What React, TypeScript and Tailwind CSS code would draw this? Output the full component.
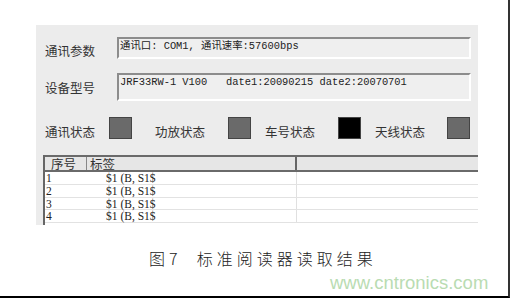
import React from "react";

const cjk = { fontFamily: '"Noto Sans CJK SC", "Noto Sans", sans-serif' };
const mono = { fontFamily: '"Liberation Mono", "Noto Sans CJK SC", monospace' };

function Field({ h, text }: { h: string; text: string }) {
    return (
        <div
            className={`flex-1 ${h} bg-[#efefef] border-t-2 border-l-2 border-t-[#8c8c8c] border-l-[#8c8c8c] border-b-2 border-r-2 border-b-white border-r-white pl-[1px] text-[10.4px] leading-[14px] text-[#222] whitespace-pre`}
            style={mono}
        >
            {text}
        </div>
    );
}

function Lamp({ dark }: { dark?: boolean }) {
    return (
        <div
            className={`w-[23px] h-[22px] border border-[#444] ${dark ? "bg-black" : "bg-[#6a6a6a]"}`}
        />
    );
}

const rows = ["1", "2", "3", "4"];

export default function App() {
    return (
        <div className="w-[510px] h-[298px] bg-white border-r-2 border-b-2 border-r-[#333] border-b-black overflow-hidden flex flex-col">
            {/* main panel */}
            <div
                className="ml-[36px] mt-[25px] w-[442px] h-[200px] bg-[#ececec] pt-[12px] text-[#333] overflow-hidden"
                style={cjk}
            >
                <div className="flex items-start pl-[9px] pr-[7px]">
                    <div className="w-[72px] mt-[7px] text-[12.5px] leading-[14px] whitespace-nowrap">通讯参数</div>
                    <Field h="h-[22px]" text="通讯口: COM1, 通讯速率:57600bps" />
                </div>
                <div className="flex items-start pl-[9px] pr-[7px] mt-[14px]">
                    <div className="w-[72px] mt-[8px] text-[12.5px] leading-[14px] whitespace-nowrap">设备型号</div>
                    <Field h="h-[28px]" text="JRF33RW-1 V100   date1:20090215 date2:20070701" />
                </div>

                {/* status row */}
                <div className="flex items-start pl-[9px] mt-[16px] text-[12.5px] leading-[14px] whitespace-nowrap">
                    <div className="w-[51px] mt-[8px]">通讯状态</div>
                    <div className="ml-[13px]"><Lamp /></div>
                    <div className="w-[51px] ml-[23px] mt-[8px]">功放状态</div>
                    <div className="ml-[22px]"><Lamp /></div>
                    <div className="w-[51px] ml-[14px] mt-[8px]">车号状态</div>
                    <div className="ml-[22px]"><Lamp dark /></div>
                    <div className="w-[51px] ml-[14px] mt-[8px]">天线状态</div>
                    <div className="ml-[21px]"><Lamp /></div>
                </div>

                {/* table */}
                <div className="ml-[7px] mt-[16px] bg-white border-l-2 border-l-[#666] h-[80px]">
                    <div className="flex h-[17px] bg-[#e6e6e6] border-t-2 border-b-2 border-[#6a6a6a] text-[12.5px] leading-[13px] text-[#333] whitespace-nowrap">
                        <div className="w-[42px] pl-[6px] border-r border-[#888]">序号</div>
                        <div className="w-[210px] pl-[3px] border-r-2 border-[#666]">标签</div>
                        <div className="flex-1" />
                    </div>
                    {rows.map((r) => (
                        <div key={r} className="flex h-[12.8px] border-b border-[#e2e2e2] text-[11.5px] leading-[12px] text-[#222] whitespace-nowrap" style={{ fontFamily: '"Liberation Serif", serif' }}>
                            <div className="w-[42px] pl-[1px]">{r}</div>
                            <div className="w-[210px] pl-[19px] border-r border-[#e0e0e0]">$1 (B, S1$</div>
                            <div className="flex-1" />
                        </div>
                    ))}
                </div>
            </div>

            {/* caption */}
            <div
                className="mt-[24px] pl-[149px] text-[16px] leading-[18px] font-light text-[#222] tracking-[4px] whitespace-pre"
                style={cjk}
            >
                图7  标准阅读器读取结果
            </div>
            <div
                className="mt-[6px] pl-[330px] text-[18.5px] leading-[20px] text-[#b9dcb2]"
                style={{ fontFamily: '"Liberation Sans", Arial, sans-serif' }}
            >
                www.cntronics.com
            </div>
        </div>
    );
}
